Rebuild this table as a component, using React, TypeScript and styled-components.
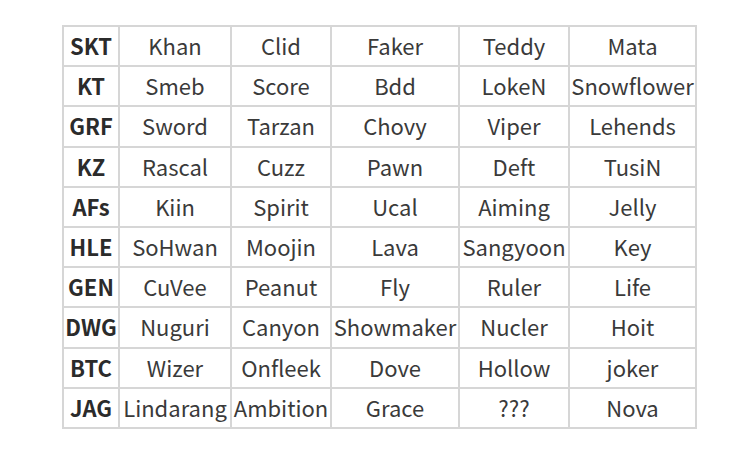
import styled, { createGlobalStyle } from "styled-components";

const GlobalStyle = createGlobalStyle`
  html, body {
    margin: 0;
    padding: 0;
    background: #ffffff;
  }
`;

const rosters: string[][] = [
  ["SKT", "Khan", "Clid", "Faker", "Teddy", "Mata"],
  ["KT", "Smeb", "Score", "Bdd", "LokeN", "Snowflower"],
  ["GRF", "Sword", "Tarzan", "Chovy", "Viper", "Lehends"],
  ["KZ", "Rascal", "Cuzz", "Pawn", "Deft", "TusiN"],
  ["AFs", "Kiin", "Spirit", "Ucal", "Aiming", "Jelly"],
  ["HLE", "SoHwan", "Moojin", "Lava", "Sangyoon", "Key"],
  ["GEN", "CuVee", "Peanut", "Fly", "Ruler", "Life"],
  ["DWG", "Nuguri", "Canyon", "Showmaker", "Nucler", "Hoit"],
  ["BTC", "Wizer", "Onfleek", "Dove", "Hollow", "joker"],
  ["JAG", "Lindarang", "Ambition", "Grace", "???", "Nova"],
];

const Page = styled.div`
  width: 747px;
  height: 451px;
  padding: 25px 0 0 62px;
  box-sizing: border-box;
`;

const Table = styled.div`
  display: grid;
  grid-template-columns: 54px 110px 98px 126px 108px 125px;
  grid-auto-rows: 38.2px;
  gap: 2px;
  padding: 2px;
  width: max-content;
  background: #d6d6d6;
`;

const Cell = styled.div<{ $team?: boolean }>`
  display: flex;
  align-items: center;
  justify-content: center;
  background: #ffffff;
  font-family: "Noto Sans CJK KR", "Noto Sans", sans-serif;
  font-size: 22px;
  line-height: 1;
  font-weight: ${(p) => (p.$team ? 700 : 400)};
  color: ${(p) => (p.$team ? "#2b2b2b" : "#3a3a3a")};
  white-space: nowrap;
  padding-bottom: 2px;
  box-sizing: border-box;
`;

export default function App() {
  return (
    <>
      <GlobalStyle />
      <Page>
        <Table>
          {rosters.map((row) =>
            row.map((name, i) => (
              <Cell key={row[0] + i} $team={i === 0}>
                {name}
              </Cell>
            ))
          )}
        </Table>
      </Page>
    </>
  );
}
